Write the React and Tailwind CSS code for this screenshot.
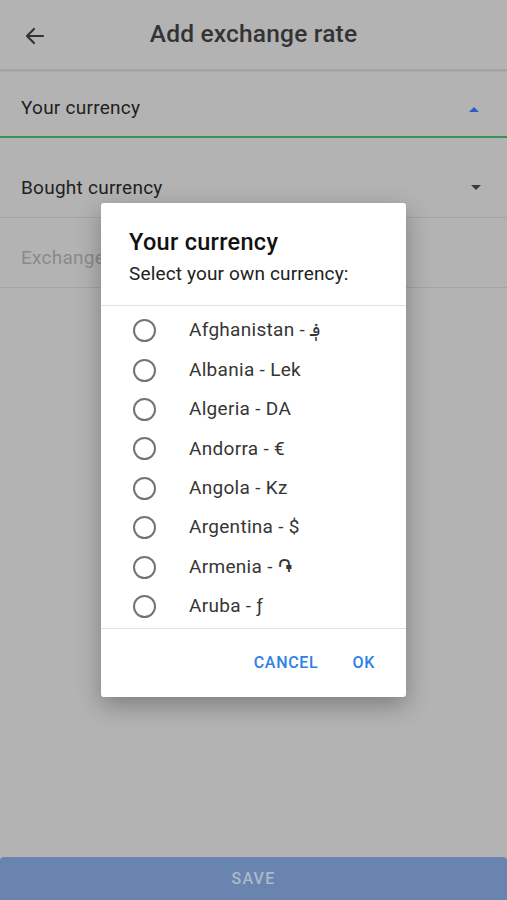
import React from 'react';

const currencies = [
  'Afghanistan - ؋',
  'Albania - Lek',
  'Algeria - DA',
  'Andorra - €',
  'Angola - Kz',
  'Argentina - $',
  'Armenia - ֏',
  'Aruba - ƒ',
];

export default function App() {
  return (
    <div className="relative w-[507px] h-[900px] overflow-hidden bg-[#b3b3b3] font-['Roboto',sans-serif]">
      {/* Header */}
      <div className="relative h-[70px] flex items-center justify-center border-b border-[#a6a6a6] shadow-[0_1px_2px_rgba(0,0,0,0.15)]">
        <svg className="absolute left-[22px] top-[24px]" width="26" height="24" viewBox="0 0 24 24" fill="none" stroke="#333" strokeWidth="2.2" strokeLinecap="round" strokeLinejoin="round">
          <path d="M20 12H4.5M11 5l-7 7 7 7" />
        </svg>
        <h1 className="text-[24.5px] font-medium text-[#333] tracking-[0.2px]">Add exchange rate</h1>
      </div>

      {/* Your currency */}
      <div className="h-[68px] flex items-center justify-between pl-[21px] pr-[26px] pt-[11px] border-b-2 border-[#3f9150]">
        <span className="text-[19px] tracking-[0.25px] text-[#1f1f1f]">Your currency</span>
        <svg width="14" height="8" viewBox="0 0 14 8"><path d="M2 7l5-5 5 5z" fill="#2b5ec4" /></svg>
      </div>

      {/* Bought currency */}
      <div className="h-[80px] flex items-center justify-between pl-[21px] pr-[24px] pt-[21px] border-b border-[#a3a3a3]">
        <span className="text-[19px] tracking-[0.25px] text-[#1f1f1f]">Bought currency</span>
        <svg width="14" height="8" viewBox="0 0 14 8"><path d="M2 1l5 5 5-5z" fill="#3a3a3a" /></svg>
      </div>

      {/* Exchange rate */}
      <div className="h-[70px] flex items-center pl-[21px] pt-[11px] border-b border-[#a3a3a3]">
        <span className="text-[19px] tracking-[0.25px] text-[#8a8a8a]">Exchange rate</span>
      </div>

      {/* Save */}
      <div className="absolute left-0 right-0 bottom-0 h-[43px] rounded-t-[4px] bg-[#6a84b0] flex items-center justify-center">
        <span className="text-[16px] font-medium tracking-[1.2px] text-[#acb8cc]">SAVE</span>
      </div>

      {/* Dialog */}
      <div className="absolute left-[101px] top-[203px] w-[305px] h-[494px] bg-white rounded-[3px] shadow-[0_8px_24px_rgba(0,0,0,0.3)] flex flex-col">
        <div className="pl-[28px] pt-[25px] h-[103px] border-b border-[#e2e2e2]">
          <div className="text-[23.5px] font-medium text-[#111] leading-[28px] tracking-[0.3px]">Your currency</div>
          <div className="text-[19px] text-[#222] leading-[22px] mt-[7px] tracking-[0.15px]">Select your own currency:</div>
        </div>
        <div className="pt-[5px] h-[323px] border-b border-[#e2e2e2]">
          {currencies.map((c) => (
            <div key={c} className="h-[39.4px] flex items-center pl-[32px]">
              <span className="w-[23px] h-[23px] rounded-full border-2 border-[#737373]" />
              <span className="ml-[33px] text-[19px] tracking-[0.3px] text-[#363636] font-['Roboto','Noto_Sans','DejaVu_Sans',sans-serif]">{c}</span>
            </div>
          ))}
        </div>
        <div className="flex-1 flex items-center justify-end pr-[31px] gap-[34px]">
          <span className="text-[16px] font-medium text-[#2f80e6] tracking-[0.7px]">CANCEL</span>
          <span className="text-[16px] font-medium text-[#2f80e6] tracking-[0.7px]">OK</span>
        </div>
      </div>
    </div>
  );
}
